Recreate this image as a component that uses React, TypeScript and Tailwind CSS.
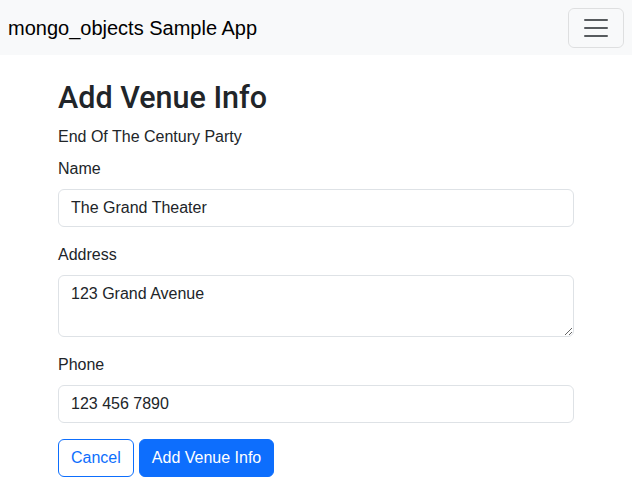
import React from "react";

export default function App() {
  const font = { fontFamily: '"Liberation Sans", Arial, sans-serif' };
  return (
    <div className="min-h-[503px] bg-white text-[#212529]" style={font}>
      <nav className="h-[55px] bg-[#f8f9fa] flex items-center justify-between pl-2 pr-2">
        <span className="text-[20px] leading-[30px] text-black">mongo_objects Sample App</span>
        <button className="w-[56px] h-[40px] border border-[rgba(0,0,0,0.1)] rounded-[6px] flex items-center justify-center">
          <svg width="30" height="30" viewBox="0 0 30 30">
            <path d="M4 7h22M4 15h22M4 23h22" stroke="rgba(33,37,41,0.75)" strokeWidth="2" strokeLinecap="round" strokeMiterlimit="10" />
          </svg>
        </button>
      </nav>
      <div className="w-[540px] mx-auto px-3 pt-6">
        <h1 className="text-[30.5px] leading-[38px] font-medium mb-2 font-['Roboto',sans-serif]">Add Venue Info</h1>
        <p className="text-base leading-6 mb-2">End Of The Century Party</p>
        <div className="mb-4">
          <label className="block text-base leading-6 mb-2">Name</label>
          <input
            defaultValue="The Grand Theater"
            className="block w-full h-[38px] px-3 py-1.5 text-base leading-6 border border-[#dee2e6] rounded-[6px] text-[#212529] outline-none"
          />
        </div>
        <div className="mb-4">
          <label className="block text-base leading-6 mb-2">Address</label>
          <textarea
            rows={2}
            defaultValue="123 Grand Avenue"
            className="block w-full h-[62px] px-3 py-1.5 text-base leading-6 border border-[#dee2e6] rounded-[6px] text-[#212529] outline-none resize-y"
          />
        </div>
        <div className="mb-4">
          <label className="block text-base leading-6 mb-2">Phone</label>
          <input
            defaultValue="123 456 7890"
            className="block w-full h-[38px] px-3 py-1.5 text-base leading-6 border border-[#dee2e6] rounded-[6px] text-[#212529] outline-none"
          />
        </div>
        <div className="flex gap-[5px]">
          <button className="h-[38px] px-3 border border-[#0d6efd] text-[#0d6efd] rounded-[6px] text-base leading-6 bg-white">
            Cancel
          </button>
          <button className="h-[38px] px-3 border border-[#0d6efd] bg-[#0d6efd] text-white rounded-[6px] text-base leading-6">
            Add Venue Info
          </button>
        </div>
      </div>
    </div>
  );
}
